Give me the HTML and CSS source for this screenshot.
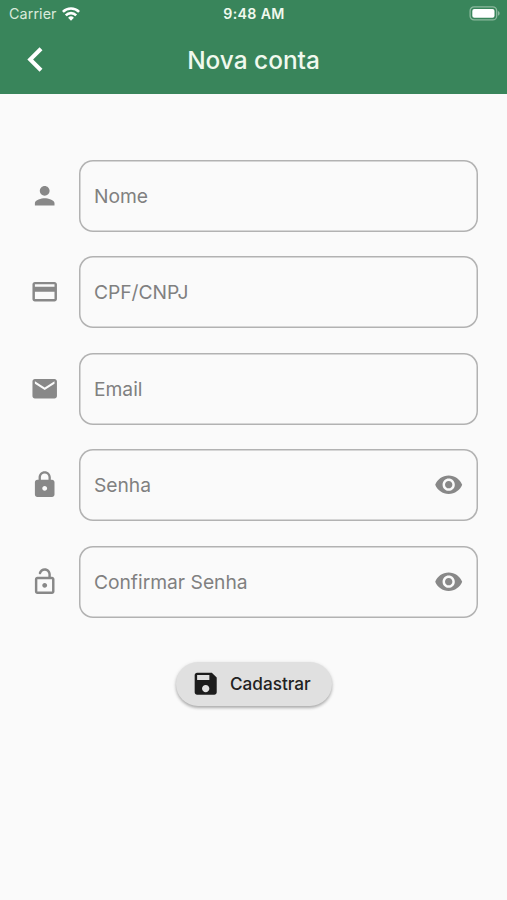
FILE: index.html
```html
<!DOCTYPE html>
<html lang="pt-BR">
<head>
<meta charset="utf-8">
<title>Nova conta</title>
<link rel="stylesheet" href="styles.css">
</head>
<body>
<header class="header">
  <div class="status">
    <div class="carrier"><span>Carrier</span>
      <svg class="wifi" viewBox="0 0 18 14"><g fill="none" stroke="currentColor" stroke-width="2.6"><path d="M.9 4.9a11.5 11.5 0 0 1 16.2 0"/><path d="M3.8 8.3a7.4 7.4 0 0 1 10.4 0"/></g><path fill="currentColor" d="M9 13.8l-2.9-3a4.1 4.1 0 0 1 5.8 0z"/></svg>
    </div>
    <time class="clock">9:48 AM</time>
    <svg class="battery" viewBox="0 0 32 15"><rect x="1.1" y=".9" width="26.6" height="13" rx="4" fill="none" stroke="#8cb99e" stroke-width="1.3"/><rect x="3.3" y="3" width="22.2" height="8.8" rx="2" fill="#fff"/><path fill="#8cb99e" d="M29 5c2.2 1 2.2 3.8 0 4.8z"/></svg>
  </div>
  <div class="bar">
    <svg class="back" viewBox="0 0 24 24"><path d="M15.41 7.41 14 6l-6 6 6 6 1.41-1.41L10.83 12z"/></svg>
    <h1 class="title">Nova conta</h1>
  </div>
</header>
<main class="form">
  <div class="row">
    <svg class="icon" viewBox="0 0 24 24"><path d="M12 12c2.21 0 4-1.79 4-4s-1.79-4-4-4-4 1.79-4 4 1.79 4 4 4zm0 2c-2.67 0-8 1.34-8 4v2h16v-2c0-2.66-5.33-4-8-4z"/></svg>
    <div class="field"><span>Nome</span></div>
  </div>
  <div class="row">
    <svg class="icon" viewBox="0 0 24 24"><path d="M20 4H4c-1.11 0-1.99.89-1.99 2L2 18c0 1.11.89 2 2 2h16c1.11 0 2-.89 2-2V6c0-1.11-.89-2-2-2zm0 14H4v-6h16v6zm0-10H4V6h16v2z"/></svg>
    <div class="field"><span>CPF/CNPJ</span></div>
  </div>
  <div class="row">
    <svg class="icon" viewBox="0 0 24 24"><path d="M20 4H4c-1.1 0-1.99.9-1.99 2L2 18c0 1.1.9 2 2 2h16c1.1 0 2-.9 2-2V6c0-1.1-.9-2-2-2zm0 4l-8 5-8-5V6l8 5 8-5v2z"/></svg>
    <div class="field"><span>Email</span></div>
  </div>
  <div class="row">
    <svg class="icon" viewBox="0 0 24 24"><path d="M18 8h-1V6c0-2.76-2.24-5-5-5S7 3.24 7 6v2H6c-1.1 0-2 .9-2 2v10c0 1.1.9 2 2 2h12c1.1 0 2-.9 2-2V10c0-1.1-.9-2-2-2zm-6 9c-1.1 0-2-.9-2-2s.9-2 2-2 2 .9 2 2-.9 2-2 2zm3.1-9H8.9V6c0-1.71 1.39-3.1 3.1-3.1 1.71 0 3.1 1.39 3.1 3.1v2z"/></svg>
    <div class="field"><span>Senha</span>
      <svg class="icon" viewBox="0 0 24 24"><path d="M12 4.5C7 4.5 2.73 7.61 1 12c1.73 4.39 6 7.5 11 7.5s9.27-3.11 11-7.5c-1.73-4.39-6-7.5-11-7.5zM12 17c-2.76 0-5-2.24-5-5s2.24-5 5-5 5 2.24 5 5-2.24 5-5 5zm0-8c-1.66 0-3 1.34-3 3s1.34 3 3 3 3-1.34 3-3-1.34-3-3-3z"/></svg>
    </div>
  </div>
  <div class="row">
    <svg class="icon" viewBox="0 0 24 24"><path d="M12 17c1.1 0 2-.9 2-2s-.9-2-2-2-2 .9-2 2 .9 2 2 2zm6-9h-1V6c0-2.76-2.24-5-5-5-2.28 0-4.27 1.54-4.84 3.75-.14.54.18 1.08.72 1.22.53.14 1.08-.18 1.22-.72C9.44 3.93 10.63 3 12 3c1.65 0 3 1.35 3 3v2H6c-1.1 0-2 .9-2 2v10c0 1.1.9 2 2 2h12c1.1 0 2-.9 2-2V10c0-1.1-.9-2-2-2zm0 12H6V10h12v10z"/></svg>
    <div class="field"><span>Confirmar Senha</span>
      <svg class="icon" viewBox="0 0 24 24"><path d="M12 4.5C7 4.5 2.73 7.61 1 12c1.73 4.39 6 7.5 11 7.5s9.27-3.11 11-7.5c-1.73-4.39-6-7.5-11-7.5zM12 17c-2.76 0-5-2.24-5-5s2.24-5 5-5 5 2.24 5 5-2.24 5-5 5zm0-8c-1.66 0-3 1.34-3 3s1.34 3 3 3 3-1.34 3-3-1.34-3-3-3z"/></svg>
    </div>
  </div>
  <button class="submit" type="button">
    <svg class="icon" viewBox="0 0 24 24"><path d="M17 3H5c-1.11 0-2 .9-2 2v14c0 1.1.89 2 2 2h14c1.1 0 2-.9 2-2V7l-4-4zm-5 16c-1.66 0-3-1.34-3-3s1.34-3 3-3 3 1.34 3 3-1.34 3-3 3zm3-10H5V5h10v4z"/></svg>
    <span>Cadastrar</span>
  </button>
</main>
</body>
</html>
```
FILE: styles.css
```css
* { box-sizing: border-box; }
body {
  margin: 0;
  min-height: 900px;
  background: #fafafa;
  font-family: Inter, "Liberation Sans", sans-serif;
}
svg { display: block; flex: none; }
.header { height: 94px; background: #39855b; color: #fff; }
.status {
  display: grid;
  grid-template-columns: 1fr auto 1fr;
  align-items: center;
  height: 27px;
  padding: 0 6px 0 9px;
}
.carrier {
  display: flex;
  align-items: center;
  gap: 5px;
  color: #d9eadb;
  font-size: 14.3px;
  letter-spacing: .1px;
}
.wifi { width: 18px; height: 14px; color: #fff; }
.clock {
  margin-right: 2px;
  font-size: 14.2px;
  font-weight: 600;
  letter-spacing: .35px;
  color: #f0f9ee;
}
.battery { width: 32px; height: 15px; justify-self: end; }
.bar {
  display: grid;
  grid-template-columns: 49px 1fr 49px;
  align-items: center;
  height: 65px;
  padding: 0 13px 0 11px;
}
.back { width: 49px; height: 49px; fill: #fff; }
.title {
  margin: 0;
  padding-left: 2px;
  text-align: center;
  font-size: 24.4px;
  font-weight: 500;
  color: #f0f9ee;
}
.form {
  display: flex;
  flex-direction: column;
  gap: 24.5px;
  padding: 65.7px 29px 0 30px;
}
.row { display: flex; align-items: center; gap: 19.5px; }
.icon { width: 29.4px; height: 29.4px; fill: #888; }
.field {
  flex: 1;
  display: flex;
  align-items: center;
  justify-content: space-between;
  height: 72px;
  padding: 0 15px;
  border-radius: 14px;
  box-shadow: inset 0 0 0 1.5px #b2b2b2;
  color: #808080;
  font-size: 19.25px;
}
.submit {
  align-self: center;
  display: flex;
  align-items: center;
  gap: 9.5px;
  width: 156px;
  height: 44px;
  margin-top: 20px;
  padding: 0 0 0 15px;
  border: 0;
  border-radius: 22px;
  background: #e0e0e0;
  box-shadow: 0 2px 3px rgba(0, 0, 0, .26), 0 1px 4px rgba(0, 0, 0, .1);
  color: #222;
  font: 500 17.2px/20px Inter, "Liberation Sans", sans-serif;
}
.submit .icon { fill: #1c1c1c; }
```
